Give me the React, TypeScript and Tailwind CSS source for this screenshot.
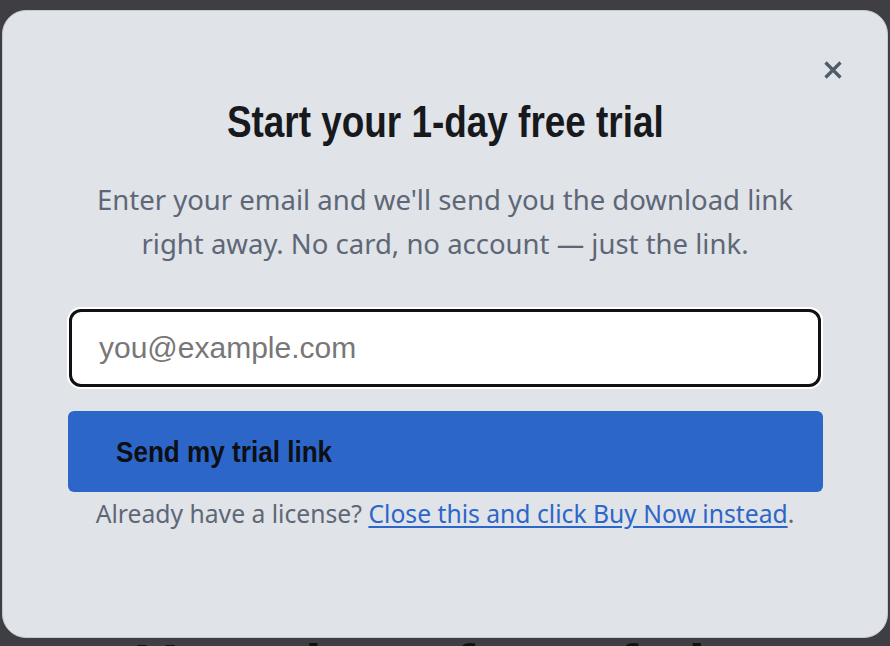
import { useState } from "react";

const arial = { fontFamily: '"Liberation Sans", Arial, sans-serif' };
const body = { fontFamily: '"Noto Sans", "Open Sans", sans-serif' };

export default function App() {
  const [email, setEmail] = useState("");

  return (
    <div className="relative h-[646px] w-[890px] overflow-hidden bg-[#3e3e43]">
      {/* page behind the overlay */}
      <div className="pt-[636px] pl-[136px]">
        <h1 className="whitespace-nowrap text-[60px] font-bold leading-none text-[#111]" style={arial}>
          Your days, free of clutter
        </h1>
      </div>

      {/* modal */}
      <div className="absolute left-[2px] top-[10px] flex h-[628px] w-[886px] flex-col rounded-[24px] border border-[#c3c8d0] bg-[#e0e3e8] px-[64px]">
        <div className="flex justify-end pt-[49px] -mr-[20px]">
          <button className="flex h-[20px] w-[20px] items-center justify-center text-[#505a68]">
            <svg viewBox="0 0 20 20" className="h-[20px] w-[20px]" fill="none" stroke="currentColor" strokeWidth={3.2}>
              <path d="M2.5 2.5l15 15M17.5 2.5l-15 15" />
            </svg>
          </button>
        </div>

        <h2 className="mt-[18px] flex justify-center text-[45px] font-bold leading-[48px] text-[#17191d]" style={arial}>
          <span className="inline-block scale-x-[0.82] whitespace-nowrap">Start your 1-day free trial</span>
        </h2>

        <p className="mx-auto mt-[32px] max-w-[740px] text-center text-[27.5px] leading-[44px] text-[#5e6776]" style={body}>
          Enter your email and we'll send you the download link right away. No card, no account — just the link.
        </p>

        <div className="mt-[41px] rounded-[14px] bg-white p-[2px]">
          <input
            type="email"
            value={email}
            onChange={(e) => setEmail(e.target.value)}
            placeholder="you@example.com"
            className="h-[78px] w-full rounded-[12px] border-[3px] border-[#111] bg-white px-[27px] text-[30px] text-[#111] outline-none placeholder:text-[#777]"
            style={arial}
          />
        </div>

        <button className="mt-[22px] ml-[1px] flex h-[81px] items-center rounded-[6px] bg-[#2d66c9] pl-[48px] text-[30px] font-bold text-[#0c0f14]" style={arial}>
          <span className="inline-block origin-left scale-x-[0.87] whitespace-nowrap">Send my trial link</span>
        </button>

        <p className="mt-[6px] text-center text-[24.7px] leading-[32px] text-[#5e6776]" style={body}>
          Already have a license?{" "}
          <a href="#" className="text-[#2d66c9] underline underline-offset-[3px]">
            Close this and click Buy Now instead
          </a>
          .
        </p>
      </div>
    </div>
  );
}
